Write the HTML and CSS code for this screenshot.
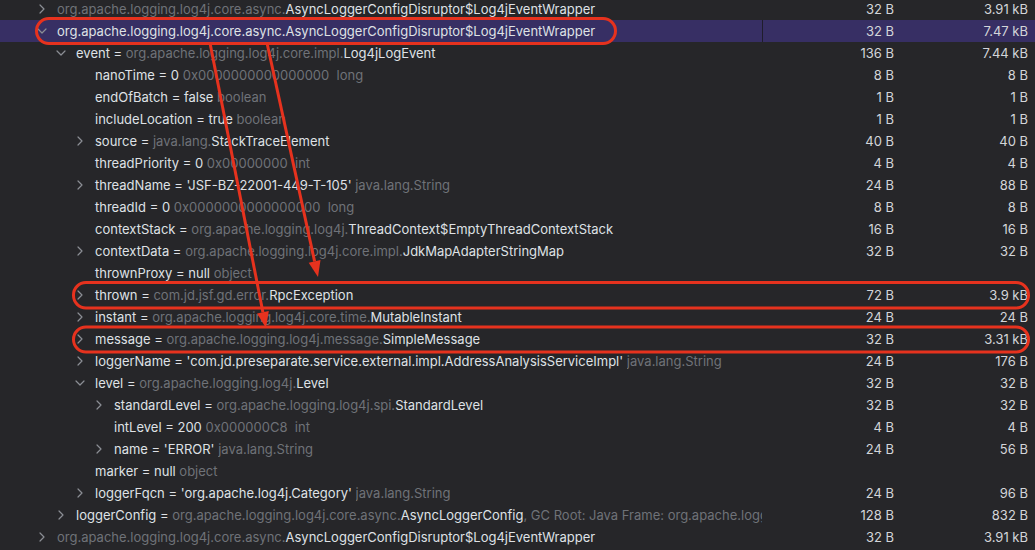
FILE: index.html
```html
<!DOCTYPE html>
<html>
<head>
<meta charset="utf-8">
<link rel="stylesheet" href="styles.css">
</head>
<body>
<div class="tree">
  <div class="row l0"><span class="nm"><span class="tg"><svg viewBox="0 0 10 10"><path d="M3 1 L7 5 L3 9"/></svg></span><span class="g">org.apache.logging.log4j.core.async.</span><span class="w">AsyncLoggerConfigDisruptor$Log4jEventWrapper</span></span><span class="sz">32 B</span><span class="rt">3.91 kB</span></div>
  <div class="row l0 sel"><span class="nm"><span class="tg"><svg viewBox="0 0 10 10"><path d="M1 3 L5 7 L9 3"/></svg></span><span class="w">org.apache.logging.log4j.core.async.AsyncLoggerConfigDisruptor$Log4jEventWrapper</span></span><span class="sz">32 B</span><span class="rt">7.47 kB</span></div>
  <div class="row l1"><span class="nm"><span class="tg"><svg viewBox="0 0 10 10"><path d="M1 3 L5 7 L9 3"/></svg></span><span class="w">event = </span><span class="g">org.apache.logging.log4j.core.impl.</span><span class="w">Log4jLogEvent</span></span><span class="sz">136 B</span><span class="rt">7.44 kB</span></div>
  <div class="row l2"><span class="nm"><span class="tg"></span><span class="w">nanoTime = 0 </span><span class="g">0x0000000000000000  long</span></span><span class="sz">8 B</span><span class="rt">8 B</span></div>
  <div class="row l2"><span class="nm"><span class="tg"></span><span class="w">endOfBatch = false </span><span class="g">boolean</span></span><span class="sz">1 B</span><span class="rt">1 B</span></div>
  <div class="row l2"><span class="nm"><span class="tg"></span><span class="w">includeLocation = true </span><span class="g">boolean</span></span><span class="sz">1 B</span><span class="rt">1 B</span></div>
  <div class="row l2"><span class="nm"><span class="tg"><svg viewBox="0 0 10 10"><path d="M3 1 L7 5 L3 9"/></svg></span><span class="w">source = </span><span class="g">java.lang.</span><span class="w">StackTraceElement</span></span><span class="sz">40 B</span><span class="rt">40 B</span></div>
  <div class="row l2"><span class="nm"><span class="tg"></span><span class="w">threadPriority = 0 </span><span class="g">0x00000000  int</span></span><span class="sz">4 B</span><span class="rt">4 B</span></div>
  <div class="row l2"><span class="nm"><span class="tg"><svg viewBox="0 0 10 10"><path d="M3 1 L7 5 L3 9"/></svg></span><span class="w">threadName = 'JSF-BZ-22001-449-T-105' </span><span class="g">java.lang.String</span></span><span class="sz">24 B</span><span class="rt">88 B</span></div>
  <div class="row l2"><span class="nm"><span class="tg"></span><span class="w">threadId = 0 </span><span class="g">0x0000000000000000  long</span></span><span class="sz">8 B</span><span class="rt">8 B</span></div>
  <div class="row l2"><span class="nm"><span class="tg"></span><span class="w">contextStack = </span><span class="g">org.apache.logging.log4j.</span><span class="w">ThreadContext$EmptyThreadContextStack</span></span><span class="sz">16 B</span><span class="rt">16 B</span></div>
  <div class="row l2"><span class="nm"><span class="tg"><svg viewBox="0 0 10 10"><path d="M3 1 L7 5 L3 9"/></svg></span><span class="w">contextData = </span><span class="g">org.apache.logging.log4j.core.impl.</span><span class="w">JdkMapAdapterStringMap</span></span><span class="sz">32 B</span><span class="rt">32 B</span></div>
  <div class="row l2"><span class="nm"><span class="tg"></span><span class="w">thrownProxy = null </span><span class="g">object</span></span><span class="sz"></span><span class="rt"></span></div>
  <div class="row l2"><span class="nm"><span class="tg"><svg viewBox="0 0 10 10"><path d="M3 1 L7 5 L3 9"/></svg></span><span class="w">thrown = </span><span class="g">com.jd.jsf.gd.error.</span><span class="w">RpcException</span></span><span class="sz">72 B</span><span class="rt">3.9 kB</span></div>
  <div class="row l2"><span class="nm"><span class="tg"><svg viewBox="0 0 10 10"><path d="M3 1 L7 5 L3 9"/></svg></span><span class="w">instant = </span><span class="g">org.apache.logging.log4j.core.time.</span><span class="w">MutableInstant</span></span><span class="sz">24 B</span><span class="rt">24 B</span></div>
  <div class="row l2"><span class="nm"><span class="tg"><svg viewBox="0 0 10 10"><path d="M3 1 L7 5 L3 9"/></svg></span><span class="w">message = </span><span class="g">org.apache.logging.log4j.message.</span><span class="w">SimpleMessage</span></span><span class="sz">32 B</span><span class="rt">3.31 kB</span></div>
  <div class="row l2"><span class="nm"><span class="tg"><svg viewBox="0 0 10 10"><path d="M3 1 L7 5 L3 9"/></svg></span><span class="w">loggerName = 'com.jd.preseparate.service.external.impl.AddressAnalysisServiceImpl' </span><span class="g">java.lang.String</span></span><span class="sz">24 B</span><span class="rt">176 B</span></div>
  <div class="row l2"><span class="nm"><span class="tg"><svg viewBox="0 0 10 10"><path d="M1 3 L5 7 L9 3"/></svg></span><span class="w">level = </span><span class="g">org.apache.logging.log4j.</span><span class="w">Level</span></span><span class="sz">32 B</span><span class="rt">32 B</span></div>
  <div class="row l3"><span class="nm"><span class="tg"><svg viewBox="0 0 10 10"><path d="M3 1 L7 5 L3 9"/></svg></span><span class="w">standardLevel = </span><span class="g">org.apache.logging.log4j.spi.</span><span class="w">StandardLevel</span></span><span class="sz">32 B</span><span class="rt">32 B</span></div>
  <div class="row l3"><span class="nm"><span class="tg"></span><span class="w">intLevel = 200 </span><span class="g">0x000000C8  int</span></span><span class="sz">4 B</span><span class="rt">4 B</span></div>
  <div class="row l3"><span class="nm"><span class="tg"><svg viewBox="0 0 10 10"><path d="M3 1 L7 5 L3 9"/></svg></span><span class="w">name = 'ERROR' </span><span class="g">java.lang.String</span></span><span class="sz">24 B</span><span class="rt">56 B</span></div>
  <div class="row l2"><span class="nm"><span class="tg"></span><span class="w">marker = null </span><span class="g">object</span></span><span class="sz"></span><span class="rt"></span></div>
  <div class="row l2"><span class="nm"><span class="tg"><svg viewBox="0 0 10 10"><path d="M3 1 L7 5 L3 9"/></svg></span><span class="w">loggerFqcn = 'org.apache.log4j.Category' </span><span class="g">java.lang.String</span></span><span class="sz">24 B</span><span class="rt">96 B</span></div>
  <div class="row l1"><span class="nm"><span class="tg"><svg viewBox="0 0 10 10"><path d="M3 1 L7 5 L3 9"/></svg></span><span class="w">loggerConfig = </span><span class="g">org.apache.logging.log4j.core.async.</span><span class="w">AsyncLoggerConfig</span><span class="g">, GC Root: Java Frame: org.apache.logg</span></span><span class="sz">128 B</span><span class="rt">832 B</span></div>
  <div class="row l0"><span class="nm"><span class="tg"><svg viewBox="0 0 10 10"><path d="M3 1 L7 5 L3 9"/></svg></span><span class="g">org.apache.logging.log4j.core.async.</span><span class="w">AsyncLoggerConfigDisruptor$Log4jEventWrapper</span></span><span class="sz">32 B</span><span class="rt">3.91 kB</span></div>
</div>
<svg class="notes" viewBox="0 0 1035 550" width="1035" height="550">
  <g fill="none" stroke="#e6321e" stroke-width="3">
    <rect x="36.5" y="18.5" width="579" height="25" rx="12.5"/>
    <rect x="73.5" y="282.5" width="955" height="25.5" rx="12.5"/>
    <rect x="73.5" y="327" width="955" height="25" rx="12.5"/>
    <line x1="210" y1="43" x2="262.9" y2="312.3"/>
    <line x1="267" y1="43" x2="314.6" y2="261.4"/>
  </g>
  <g fill="#e6321e">
    <polygon points="266,328 268.8,311.1 257,313.5"/>
    <polygon points="318,277 320.5,260.1 308.7,262.7"/>
  </g>
</svg>
</body>
</html>
```

FILE: styles.css
```css
html, body {
  margin: 0;
  padding: 0;
  background: #262629;
  width: 1035px;
  height: 550px;
  overflow: hidden;
}
body {
  position: relative;
  font-family: Inter, "Noto Sans", sans-serif;
  font-size: 13px;
  color: #dfe1e5;
}
.tree {
  margin-top: -2px;
  display: flex;
  flex-direction: column;
}
.row {
  display: grid;
  grid-template-columns: 762px 132px 134px 1fr;
  height: 22px;
  line-height: 22px;
  white-space: pre;
}
.row.sel {
  background: #372f64;
}
.row.sel .sz {
  box-shadow: inset 1px 0 0 #1f1d2c;
}
.nm {
  display: flex;
  align-items: center;
  overflow: hidden;
  white-space: pre;
  min-width: 0;
}
.l0 .nm { padding-left: 34px; }
.l1 .nm { padding-left: 53px; }
.l2 .nm { padding-left: 72px; }
.l3 .nm { padding-left: 91px; }
.tg {
  flex: 0 0 16px;
  width: 16px;
  height: 22px;
  margin-right: 7px;
  display: flex;
  align-items: center;
  justify-content: center;
}
.tg svg {
  width: 10px;
  height: 10px;
  fill: none;
  stroke: #8b8e94;
  stroke-width: 1.2;
  stroke-linecap: round;
  stroke-linejoin: round;
}
.w { color: #dfe1e5; flex: none; }
.g { color: #6f7278; flex: none; }
.nm .g:last-child { flex: 0 1 auto; overflow: hidden; }
.sel .g { color: #dfe1e5; }
.sz, .rt {
  text-align: right;
  color: #d3d5d9;
}
.notes {
  position: absolute;
  left: 0;
  top: 0;
  pointer-events: none;
}
```
